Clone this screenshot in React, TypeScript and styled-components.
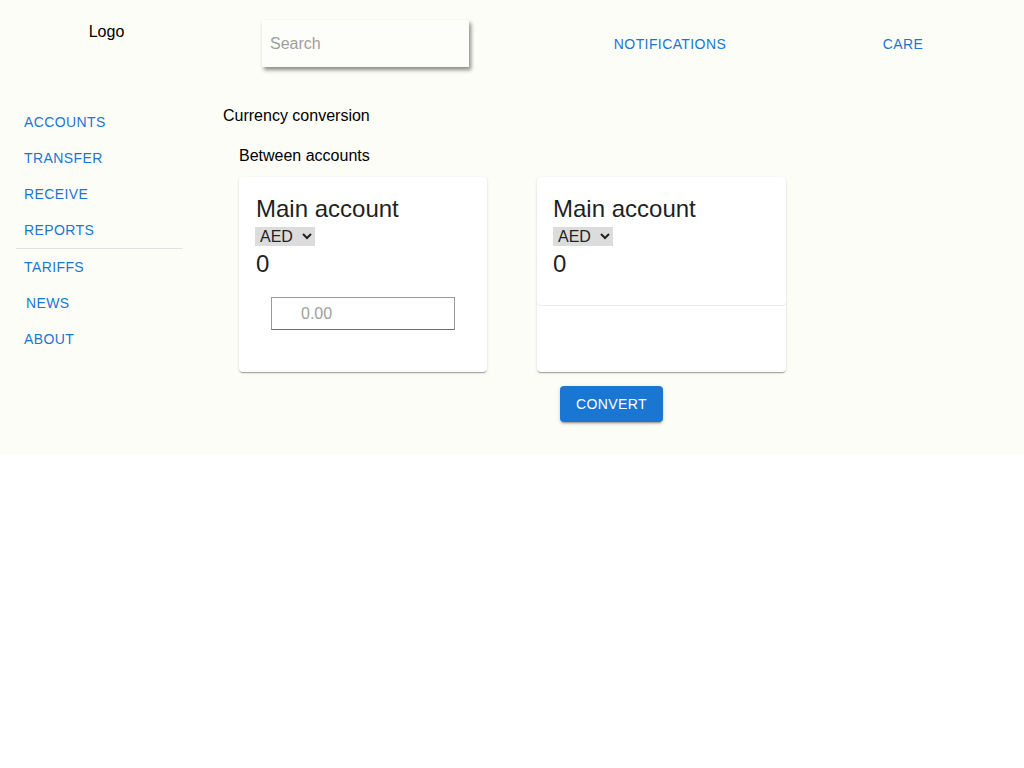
import React from "react";
import styled, { createGlobalStyle } from "styled-components";

const GlobalStyle = createGlobalStyle`
    body {
        margin: 0;
        background: #ffffff;
        font-family: "Liberation Sans", Arial, sans-serif;
    }
`;

const Page = styled.div`
    background-color: #fdfdf7;
    padding-bottom: 33px;
`;

const Header = styled.header`
    display: grid;
    grid-template-columns: 213px 256px 402px 64px;
    height: 105px;
    align-items: start;
`;

const Logo = styled.div`
    padding-top: 23px;
    text-align: center;
    font-size: 16px;
    color: #000;
`;

const SearchCell = styled.div`
    padding: 20px 0 0 49px;
`;

const SearchInput = styled.input`
    box-sizing: border-box;
    width: 207px;
    height: 47px;
    border: none;
    outline: none;
    background: #fdfdf9;
    padding: 0 8px;
    font-family: "Liberation Sans", Arial, sans-serif;
    font-size: 16px;
    box-shadow: 2px 3px 4px rgba(0, 0, 0, 0.45);
    &::placeholder {
        color: #9e9e9e;
    }
`;

const NavCell = styled.div`
    display: flex;
    justify-content: center;
    padding-top: 26px;
`;

const TextButton = styled.button<{ $shift?: number }>`
    display: block;
    border: none;
    background: transparent;
    height: 36px;
    padding: 6px 8px 6px ${(p) => 8 + (p.$shift || 0)}px;
    font-family: "Liberation Sans", Arial, sans-serif;
    font-size: 14px;
    font-weight: 400;
    letter-spacing: 0.4px;
    text-transform: uppercase;
    color: #1976d2;
    text-align: left;
    cursor: pointer;
    white-space: nowrap;
`;

const Body = styled.div`
    display: flex;
`;

const Sidebar = styled.nav`
    width: 166px;
    padding-left: 16px;
    margin-right: 41px;
    margin-top: -1px;
    display: flex;
    flex-direction: column;
`;

const Divider = styled.hr`
    margin: 0;
    border: none;
    border-top: 1px solid #e0e0e6;
`;

const Main = styled.main`
    display: flex;
    flex-direction: column;
`;

const Title = styled.div`
    font-size: 16px;
    line-height: 18px;
    margin-top: 2px;
    color: #000;
`;

const SubTitle = styled.div`
    font-size: 16px;
    line-height: 18px;
    margin: 22px 0 12px 16px;
    color: #000;
`;

const CardsRow = styled.div`
    display: grid;
    grid-template-columns: 248px 249px;
    column-gap: 50px;
    margin-left: 16px;
`;

const Card = styled.div`
    background: #fff;
    border-radius: 4px;
    height: 195px;
    box-shadow: 0 2px 1px -1px rgba(0, 0, 0, 0.2), 0 1px 1px 0 rgba(0, 0, 0, 0.14),
        0 1px 3px 0 rgba(0, 0, 0, 0.12);
    overflow: hidden;
`;

const CardSection = styled.div<{ $boxed?: boolean }>`
    padding: 16px 16px 0 ${(p) => (p.$boxed ? 16 : 17)}px;
    ${(p) =>
        p.$boxed &&
        `
        height: 128px;
        box-sizing: border-box;
        border-radius: 4px;
        box-shadow: 0 0 0 1px rgba(0, 0, 0, 0.08);
    `}
`;

const AccountName = styled.div`
    font-family: "Liberation Sans", Arial, sans-serif;
    font-size: 24px;
    line-height: 32px;
    color: #1f1f1f;
`;

const CurrencySelect = styled.select<{ $nudge: number }>`
    display: block;
    height: 19px;
    width: 60px;
    margin: 2px 0 0 ${(p) => p.$nudge}px;
    border: none;
    border-radius: 0;
    background: #dcdcdc;
    font-family: "Liberation Sans", Arial, sans-serif;
    font-size: 16px;
    color: #222;
    padding: 0 0 0 1px;
`;

const Balance = styled.div`
    font-family: "Liberation Sans", Arial, sans-serif;
    font-size: 24px;
    line-height: 32px;
    margin-top: 2px;
    color: #1f1f1f;
`;

const AmountInput = styled.input`
    box-sizing: border-box;
    display: block;
    width: 184px;
    height: 33px;
    margin: 17px 0 0 15px;
    border: 1px solid #9a9a9a;
    border-bottom-color: #6e6e6e;
    padding: 0 0 0 29px;
    font-family: "Liberation Sans", Arial, sans-serif;
    font-size: 16px;
    background: #fff;
    outline: none;
    &::placeholder {
        color: #a0a0a0;
    }
`;

const ConvertButton = styled.button`
    align-self: flex-start;
    margin: 14px 0 0 337px;
    height: 36px;
    padding: 0 16px;
    border: none;
    border-radius: 4px;
    background: #1976d2;
    color: #fff;
    font-family: "Liberation Sans", Arial, sans-serif;
    font-size: 14px;
    font-weight: 400;
    letter-spacing: 0.4px;
    box-shadow: 0 3px 1px -2px rgba(0, 0, 0, 0.2), 0 2px 2px 0 rgba(0, 0, 0, 0.14),
        0 1px 5px 0 rgba(0, 0, 0, 0.12);
    cursor: pointer;
`;

const topItems = ["Accounts", "Transfer", "Receive", "Reports"];

function AccountInfo({ nudge }: { nudge: number }) {
    return (
        <>
            <AccountName>Main account</AccountName>
            <CurrencySelect defaultValue="AED" $nudge={nudge}>
                <option>AED</option>
                <option>USD</option>
                <option>EUR</option>
            </CurrencySelect>
            <Balance>0</Balance>
        </>
    );
}

function App() {
    return (
        <Page>
            <GlobalStyle />
            <Header>
                <Logo>Logo</Logo>
                <SearchCell>
                    <SearchInput placeholder="Search" />
                </SearchCell>
                <NavCell>
                    <TextButton>Notifications</TextButton>
                </NavCell>
                <NavCell>
                    <TextButton>Care</TextButton>
                </NavCell>
            </Header>
            <Body>
                <Sidebar>
                    {topItems.map((item) => (
                        <TextButton key={item}>{item}</TextButton>
                    ))}
                    <Divider />
                    <TextButton>Tariffs</TextButton>
                    <TextButton $shift={2}>News</TextButton>
                    <TextButton>About</TextButton>
                </Sidebar>
                <Main>
                    <Title>Currency conversion</Title>
                    <SubTitle>Between accounts</SubTitle>
                    <CardsRow>
                        <Card>
                            <CardSection>
                                <AccountInfo nudge={-1} />
                                <AmountInput placeholder="0.00" />
                            </CardSection>
                        </Card>
                        <Card>
                            <CardSection $boxed>
                                <AccountInfo nudge={0} />
                            </CardSection>
                        </Card>
                    </CardsRow>
                    <ConvertButton>CONVERT</ConvertButton>
                </Main>
            </Body>
        </Page>
    );
}

export default App;
